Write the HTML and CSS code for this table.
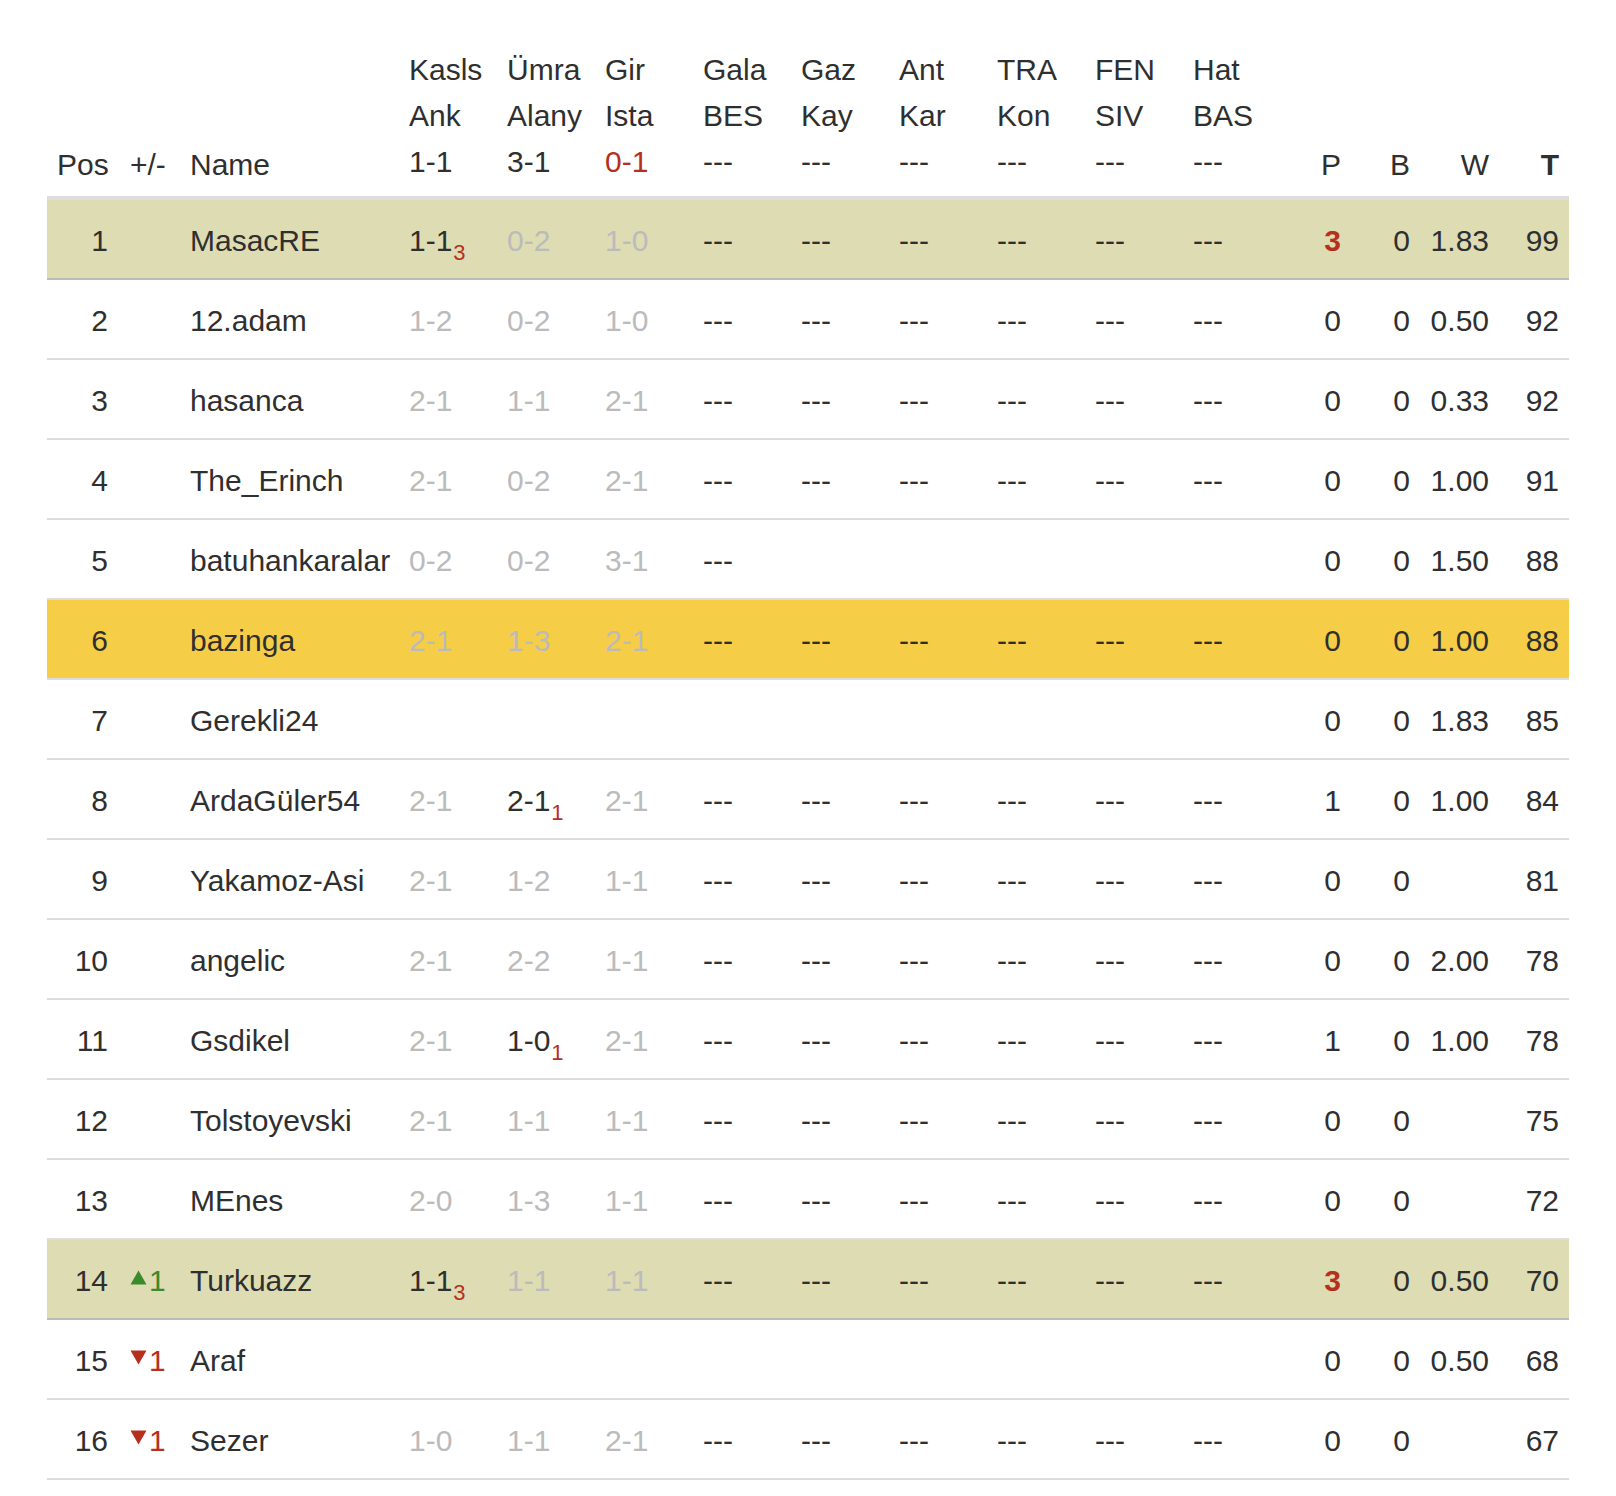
FILE: index.html
```html
<!DOCTYPE html>
<html lang="tr">
<head>
<meta charset="utf-8">
<title>Tablo</title>
<link rel="stylesheet" href="styles.css">
</head>
<body>
<div class="page">
<table class="standings">
  <colgroup>
    <col class="c-pos"><col class="c-move"><col class="c-name">
    <col class="c-score"><col class="c-score"><col class="c-score"><col class="c-score"><col class="c-score"><col class="c-score"><col class="c-score"><col class="c-score"><col class="c-score">
    <col class="c-p"><col class="c-b"><col class="c-w"><col class="c-t">
  </colgroup>
  <thead>
    <tr>
      <th class="pos low">Pos</th>
      <th class="move low">+/-</th>
      <th class="name low">Name</th>
      <th class="score">Kasls<br>Ank<br>1-1</th>
      <th class="score">Ümra<br>Alany<br>3-1</th>
      <th class="score">Gir<br>Ista<br><span class="red">0-1</span></th>
      <th class="score">Gala<br>BES<br>---</th>
      <th class="score">Gaz<br>Kay<br>---</th>
      <th class="score">Ant<br>Kar<br>---</th>
      <th class="score">TRA<br>Kon<br>---</th>
      <th class="score">FEN<br>SIV<br>---</th>
      <th class="score">Hat<br>BAS<br>---</th>
      <th class="num low">P</th>
      <th class="num low">B</th>
      <th class="num low">W</th>
      <th class="num low bold">T</th>
    </tr>
  </thead>
  <tbody>
    <tr class="olive">
      <td class="pos">1</td><td class="move"></td><td class="name">MasacRE</td>
      <td>1-1<span class="sub">3</span></td><td class="dim">0-2</td><td class="dim">1-0</td>
      <td>---</td><td>---</td><td>---</td><td>---</td><td>---</td><td>---</td>
      <td class="num red bold">3</td><td class="num">0</td><td class="num">1.83</td><td class="num">99</td>
    </tr>
    <tr>
      <td class="pos">2</td><td class="move"></td><td class="name">12.adam</td>
      <td class="dim">1-2</td><td class="dim">0-2</td><td class="dim">1-0</td>
      <td>---</td><td>---</td><td>---</td><td>---</td><td>---</td><td>---</td>
      <td class="num">0</td><td class="num">0</td><td class="num">0.50</td><td class="num">92</td>
    </tr>
    <tr>
      <td class="pos">3</td><td class="move"></td><td class="name">hasanca</td>
      <td class="dim">2-1</td><td class="dim">1-1</td><td class="dim">2-1</td>
      <td>---</td><td>---</td><td>---</td><td>---</td><td>---</td><td>---</td>
      <td class="num">0</td><td class="num">0</td><td class="num">0.33</td><td class="num">92</td>
    </tr>
    <tr>
      <td class="pos">4</td><td class="move"></td><td class="name">The_Erinch</td>
      <td class="dim">2-1</td><td class="dim">0-2</td><td class="dim">2-1</td>
      <td>---</td><td>---</td><td>---</td><td>---</td><td>---</td><td>---</td>
      <td class="num">0</td><td class="num">0</td><td class="num">1.00</td><td class="num">91</td>
    </tr>
    <tr>
      <td class="pos">5</td><td class="move"></td><td class="name">batuhankaralar</td>
      <td class="dim">0-2</td><td class="dim">0-2</td><td class="dim">3-1</td>
      <td>---</td><td></td><td></td><td></td><td></td><td></td>
      <td class="num">0</td><td class="num">0</td><td class="num">1.50</td><td class="num">88</td>
    </tr>
    <tr class="yellow">
      <td class="pos">6</td><td class="move"></td><td class="name">bazinga</td>
      <td class="dim">2-1</td><td class="dim">1-3</td><td class="dim">2-1</td>
      <td>---</td><td>---</td><td>---</td><td>---</td><td>---</td><td>---</td>
      <td class="num">0</td><td class="num">0</td><td class="num">1.00</td><td class="num">88</td>
    </tr>
    <tr>
      <td class="pos">7</td><td class="move"></td><td class="name">Gerekli24</td>
      <td></td><td></td><td></td>
      <td></td><td></td><td></td><td></td><td></td><td></td>
      <td class="num">0</td><td class="num">0</td><td class="num">1.83</td><td class="num">85</td>
    </tr>
    <tr>
      <td class="pos">8</td><td class="move"></td><td class="name">ArdaGüler54</td>
      <td class="dim">2-1</td><td>2-1<span class="sub">1</span></td><td class="dim">2-1</td>
      <td>---</td><td>---</td><td>---</td><td>---</td><td>---</td><td>---</td>
      <td class="num">1</td><td class="num">0</td><td class="num">1.00</td><td class="num">84</td>
    </tr>
    <tr>
      <td class="pos">9</td><td class="move"></td><td class="name">Yakamoz-Asi</td>
      <td class="dim">2-1</td><td class="dim">1-2</td><td class="dim">1-1</td>
      <td>---</td><td>---</td><td>---</td><td>---</td><td>---</td><td>---</td>
      <td class="num">0</td><td class="num">0</td><td class="num"></td><td class="num">81</td>
    </tr>
    <tr>
      <td class="pos">10</td><td class="move"></td><td class="name">angelic</td>
      <td class="dim">2-1</td><td class="dim">2-2</td><td class="dim">1-1</td>
      <td>---</td><td>---</td><td>---</td><td>---</td><td>---</td><td>---</td>
      <td class="num">0</td><td class="num">0</td><td class="num">2.00</td><td class="num">78</td>
    </tr>
    <tr>
      <td class="pos">11</td><td class="move"></td><td class="name">Gsdikel</td>
      <td class="dim">2-1</td><td>1-0<span class="sub">1</span></td><td class="dim">2-1</td>
      <td>---</td><td>---</td><td>---</td><td>---</td><td>---</td><td>---</td>
      <td class="num">1</td><td class="num">0</td><td class="num">1.00</td><td class="num">78</td>
    </tr>
    <tr>
      <td class="pos">12</td><td class="move"></td><td class="name">Tolstoyevski</td>
      <td class="dim">2-1</td><td class="dim">1-1</td><td class="dim">1-1</td>
      <td>---</td><td>---</td><td>---</td><td>---</td><td>---</td><td>---</td>
      <td class="num">0</td><td class="num">0</td><td class="num"></td><td class="num">75</td>
    </tr>
    <tr>
      <td class="pos">13</td><td class="move"></td><td class="name">MEnes</td>
      <td class="dim">2-0</td><td class="dim">1-3</td><td class="dim">1-1</td>
      <td>---</td><td>---</td><td>---</td><td>---</td><td>---</td><td>---</td>
      <td class="num">0</td><td class="num">0</td><td class="num"></td><td class="num">72</td>
    </tr>
    <tr class="olive">
      <td class="pos">14</td>
      <td class="move up"><svg class="tri" width="17" height="15" viewBox="0 0 17 15"><path d="M8.5 0.5 L16.5 14.5 L0.5 14.5 Z"/></svg>1</td>
      <td class="name">Turkuazz</td>
      <td>1-1<span class="sub">3</span></td><td class="dim">1-1</td><td class="dim">1-1</td>
      <td>---</td><td>---</td><td>---</td><td>---</td><td>---</td><td>---</td>
      <td class="num red bold">3</td><td class="num">0</td><td class="num">0.50</td><td class="num">70</td>
    </tr>
    <tr>
      <td class="pos">15</td>
      <td class="move down"><svg class="tri" width="17" height="15" viewBox="0 0 17 15"><path d="M0.5 0.5 L16.5 0.5 L8.5 14.5 Z"/></svg>1</td>
      <td class="name">Araf</td>
      <td></td><td></td><td></td>
      <td></td><td></td><td></td><td></td><td></td><td></td>
      <td class="num">0</td><td class="num">0</td><td class="num">0.50</td><td class="num">68</td>
    </tr>
    <tr>
      <td class="pos">16</td>
      <td class="move down"><svg class="tri" width="17" height="15" viewBox="0 0 17 15"><path d="M0.5 0.5 L16.5 0.5 L8.5 14.5 Z"/></svg>1</td>
      <td class="name">Sezer</td>
      <td class="dim">1-0</td><td class="dim">1-1</td><td class="dim">2-1</td>
      <td>---</td><td>---</td><td>---</td><td>---</td><td>---</td><td>---</td>
      <td class="num">0</td><td class="num">0</td><td class="num"></td><td class="num">67</td>
    </tr>
  </tbody>
</table>
</div>
</body>
</html>
```

FILE: styles.css
```css
html, body {
  margin: 0;
  padding: 0;
  background: #ffffff;
}

.page {
  padding: 31px 0 0 47px;
  font-family: "Liberation Sans", Arial, Helvetica, sans-serif;
  font-size: 30px;
  line-height: 46px;
  color: #2f2f2f;
}

.standings {
  width: 1522px;
  table-layout: fixed;
  border-collapse: collapse;
}

.c-pos { width: 73px; }
.c-move { width: 60px; }
.c-name { width: 219px; }
.c-score { width: 98px; }
.c-p { width: 70px; }
.c-b { width: 69px; }
.c-w { width: 79px; }
.c-t { width: 70px; }

.standings th {
  font-weight: normal;
  text-align: left;
  vertical-align: bottom;
  padding: 16px 10px 11px 10px;
  border-bottom: 4px solid #dddddd;
  white-space: nowrap;
}

.standings th.low {
  padding-bottom: 8px;
}

.standings th.bold {
  font-weight: bold;
}

.standings td {
  padding: 18px 10px 14px 10px;
  border-bottom: 2px solid #dddddd;
  white-space: nowrap;
  vertical-align: middle;
}

.standings .pos {
  text-align: right;
  padding-right: 12px;
}

.standings .num {
  text-align: right;
}

.bold {
  font-weight: bold;
}

.red {
  color: #b5301f;
}

.dim {
  color: #bbbbbb;
}

.sub {
  color: #b5301f;
  font-size: 22px;
  vertical-align: -9px;
  line-height: 0;
  margin-left: 1px;
}

.olive td {
  background: #dedcb3;
}

.standings tr.olive td {
  border-bottom-color: #bbbbbb;
}

.yellow td {
  background: #f6cd47;
}

.move.up {
  color: #3b8a2b;
}

.move.down {
  color: #b5301f;
}

.tri {
  vertical-align: 6px;
  margin-right: 2px;
}

.up .tri path {
  fill: #3b8a2b;
}

.down .tri path {
  fill: #b5301f;
}
```
